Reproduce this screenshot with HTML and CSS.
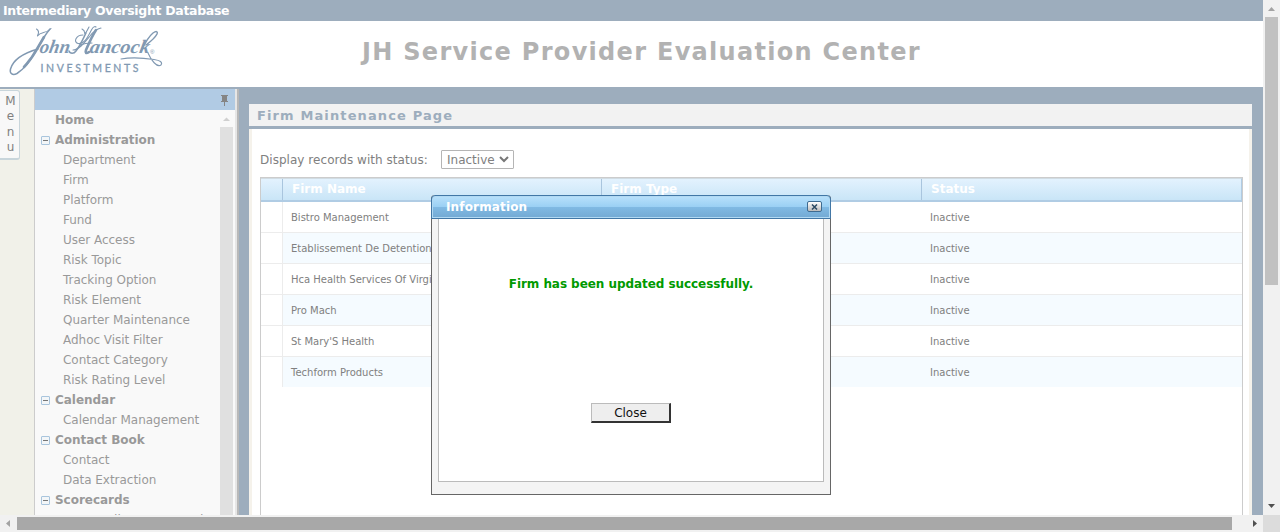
FILE: index.html
```html
<!DOCTYPE html>
<html lang="en">
<head>
<meta charset="utf-8">
<title>Intermediary Oversight Database</title>
<link rel="stylesheet" href="styles.css">
</head>
<body>
<div class="window">
  <div class="page">
    <div class="topbar">Intermediary Oversight Database</div>
    <header class="header">
      <svg class="logo" width="170" height="64" viewBox="0 21 170 64" role="img" aria-label="John Hancock Investments">
        <g class="swash">
          <path class="thin" d="M36.500 29C41 32 37 35 37.500 36C41 31 46 34 51 28.500"/>
          <path d="M50 29C44 36 40 44 36 51C31 60 24 69 17 73.500C12 76 9.500 73 10.500 69C13 60 24 53 38 49"/>
          <path class="thick" d="M44 37C40 44 36 51 32 57C29 61 27 64 24 67"/>
          <path class="thin" d="M82 29C86 31 84 33 85 34C87 31 88 29 89 27"/>
          <path d="M86 33C83 39 80 46 76 51C74 54 70 54 69 51"/>
          <path class="thin" d="M83 35C76 35 73 42 78 43.500C85 45 89 34 92 29C93 27 95 26 96 27"/>
          <path class="thin" d="M73 50C79 50 85 42 90 36C93 32 96 29 101 28"/>
          <path class="thick" d="M96 30C92 36 89 43 86 50C85 53 86 54 89 52"/>
          <path class="thin" d="M80 45C85 43 88 43 92 43"/>
          <path d="M141 51C144 45 148 37 153 33C156 31 158 31 157 34C155 38 150 42 146 45"/>
          <path class="thin" d="M121 59C132 57 144 58 154 59.500C160 60.500 163 62 161 65C157 68 151 60 148 53"/>
        </g>
        <text class="script" transform="translate(39 53) skewX(-10)" textLength="30" lengthAdjust="spacingAndGlyphs">ohn</text>
        <text class="script" transform="translate(89 53) skewX(-10)" textLength="60" lengthAdjust="spacingAndGlyphs">ancock</text>
        <text class="reg" x="150" y="54">®</text>
        <text class="invest" x="40.500" y="72" textLength="98">INVESTMENTS</text>
      </svg>
      <h1 class="app-title">JH Service Provider Evaluation Center</h1>
    </header>
    <div class="body">
      <div class="rail"><div class="menu-tab"><span>M</span><span>e</span><span>n</span><span>u</span></div></div>
      <aside class="sidebar">
        <div class="side-head">
          <svg width="9" height="11" viewBox="0 0 9 11"><path d="M1 0h7v1H7v5h1v1H5v4H4V7H1V6h1V1H1z" fill="#858585"/></svg>
        </div>
        <div class="side-body">
          <ul class="tree">
            <li class="group leaf">Home</li>
            <li class="group"><i class="toggle"></i>Administration</li>
            <li>Department</li><li>Firm</li><li>Platform</li><li>Fund</li><li>User Access</li><li>Risk Topic</li><li>Tracking Option</li><li>Risk Element</li><li>Quarter Maintenance</li><li>Adhoc Visit Filter</li><li>Contact Category</li><li>Risk Rating Level</li>
            <li class="group"><i class="toggle"></i>Calendar</li>
            <li>Calendar Management</li>
            <li class="group"><i class="toggle"></i>Contact Book</li>
            <li>Contact</li><li>Data Extraction</li>
            <li class="group"><i class="toggle"></i>Scorecards</li>
            <li>Intermediary Scorecard</li>
          </ul>
          <div class="side-scroll">
            <svg width="13" height="17" viewBox="0 0 13 17"><path d="M3 11L6.500 7.500L10 11z" fill="#d0d0d0"/></svg>
            <div class="side-thumb"></div>
          </div>
        </div>
      </aside>
      <main class="main">
        <section class="panel">
          <h2 class="panel-title">Firm Maintenance Page</h2>
          <div class="panel-body">
            <div class="filter">
              <span class="filter-label">Display records with status:</span>
              <div class="select"><span>Inactive</span><svg width="10" height="7" viewBox="0 0 10 7"><path d="M1 1l4 4l4-4" fill="none" stroke="#777" stroke-width="2"/></svg></div>
            </div>
            <div class="grid">
              <div class="row head"><div></div><div>Firm Name</div><div>Firm Type</div><div>Status</div></div>
              <div class="row"><div></div><div>Bistro Management</div><div></div><div>Inactive</div></div>
              <div class="row alt"><div></div><div>Etablissement De Detention</div><div></div><div>Inactive</div></div>
              <div class="row"><div></div><div>Hca Health Services Of Virginia</div><div></div><div>Inactive</div></div>
              <div class="row alt"><div></div><div>Pro Mach</div><div></div><div>Inactive</div></div>
              <div class="row"><div></div><div>St Mary'S Health</div><div></div><div>Inactive</div></div>
              <div class="row alt last"><div></div><div>Techform Products</div><div></div><div>Inactive</div></div>
            </div>
          </div>
        </section>
      </main>
    </div>
  </div>
  <div class="vscroll">
    <svg width="17" height="17" viewBox="0 0 17 17"><path d="M5 11L8.500 7L12 11z" fill="#a3a3a3"/></svg>
    <div class="vthumb"></div>
    <svg class="end" width="17" height="17" viewBox="0 0 17 17"><path d="M5 6L8.500 10L12 6z" fill="#505050"/></svg>
  </div>
  <div class="hscroll">
    <svg width="17" height="17" viewBox="0 0 17 17"><path d="M10 5L6 8.500L10 12z" fill="#a3a3a3"/></svg>
    <div class="hthumb"></div>
    <svg class="end-h" width="17" height="17" viewBox="0 0 17 17"><path d="M7 5L11 8.500L7 12z" fill="#505050"/></svg>
  </div>
  <div class="corner"></div>
  <div class="dialog">
    <div class="dialog-title"><span>Information</span>
      <div class="dialog-x"><svg width="7" height="6" viewBox="0 0 7 6"><path d="M1 .5L6 5.500M6 .5L1 5.500" stroke="#2c4a63" stroke-width="1.500"/></svg></div>
    </div>
    <div class="dialog-body">
      <p class="message">Firm has been updated successfully.</p>
      <button class="close">Close</button>
    </div>
  </div>
</div>
</body>
</html>
```
FILE: styles.css
```css
* { box-sizing: border-box; }
body { margin: 0; overflow: hidden; font-family: Verdana, "DejaVu Sans", sans-serif; font-size: 12px; color: #808080; }
.window { position: relative; display: grid; grid-template: 515px 17px / 1263px 17px; width: 1280px; height: 532px; }
.page { display: flex; flex-direction: column; overflow: hidden; background: #fff; }
.topbar { flex: none; height: 21px; padding-left: 3px; line-height: 21px; background: #9dadbd; color: #fff; font-weight: bold; font-size: 12.500px; letter-spacing: -.31px; }
.header { flex: none; display: flex; height: 66px; }
.logo { flex: none; }
.swash { fill: none; stroke: #8199b2; stroke-width: 1.500; stroke-linecap: round; stroke-linejoin: round; }
.swash .thick { stroke-width: 2.600; }
.swash .thin { stroke-width: 1.100; }
.script { font: italic bold 19px "Liberation Serif", serif; fill: #8199b2; }
.reg { font: 6px "Liberation Sans", sans-serif; fill: #8199b2; }
.invest { font: 10.500px Lato, sans-serif; fill: #8199b2; stroke: #8199b2; stroke-width: .3; }
.app-title { flex: 1; margin: 0 152px 0 0; padding-left: 2px; text-align: center; font-size: 24px; line-height: 63px; color: #b2b2b2; letter-spacing: 1.300px; white-space: nowrap; }
.body { flex: 1; display: flex; min-height: 0; border-top: 2px solid #9dadbd; }
.rail { flex: none; width: 34px; background: #f1f1e9; }
.menu-tab { display: flex; flex-direction: column; align-items: center; width: 20px; height: 70px; padding: 3px 0 0 2px; margin-top: 1px; line-height: 15.300px; background: #f8f8f8; border: 1px solid #c8d5db; border-width: 1px 1px 2px 0; border-radius: 0 3px 3px 0; }
.sidebar { flex: none; display: flex; flex-direction: column; width: 205px; border-left: 1px solid #ccc; border-right: 2px solid #b8b8b8; background: #f9f9f9; box-shadow: inset -2px 0 #e6e6e6; }
.side-head { flex: none; display: flex; justify-content: flex-end; align-items: center; width: 200px; height: 21px; padding: 1px 6px 0 0; background: #b1cbe4; }
.side-body { flex: 1; display: flex; min-height: 0; width: 198px; }
.tree { flex: 1; margin: 0; padding: 0; list-style: none; color: #999; white-space: nowrap; overflow: hidden; letter-spacing: -.03px; }
.tree li { display: flex; align-items: center; height: 20px; padding-left: 28px; }
.tree .group { padding-left: 6px; font-weight: bold; color: #999; }
.tree .leaf { padding-left: 20px; }
.toggle { position: relative; width: 9px; height: 9px; margin: 1px 5px 0 0; border: 1px solid #a9c5dd; border-radius: 1px; background: #f3f6f8; }
.toggle::after { content: ""; position: absolute; left: 1px; top: 3px; width: 5px; height: 1px; background: #777; }
.side-scroll { display: flex; flex-direction: column; width: 13px; }
.side-scroll svg { flex: none; }
.side-thumb { flex: 1; background: #e0e0e0; }
.main { flex: 1; display: flex; padding: 15px 11px 0 10px; background: #9dadbd; }
.panel { flex: 1; display: flex; flex-direction: column; min-width: 0; }
.panel-title { flex: none; height: 25px; margin: 0; padding-left: 8px; font-size: 13px; line-height: 23px; letter-spacing: 1.120px; color: #9dadbd; background: #f2f2f2; border-bottom: 3px solid #9dadbd; border-radius: 0 0 3px 3px; }
.panel-body { flex: 1; display: flex; flex-direction: column; padding: 21px 6px 0 8px; background: #fff; border: solid #f5f2eb; border-width: 0 3px; }
.filter { flex: none; display: flex; align-items: center; height: 19px; }
.filter-label { width: 181px; letter-spacing: .04px; }
.select { display: flex; align-items: center; justify-content: space-between; width: 73px; height: 19px; padding: 0 4px 0 5px; border: 1px solid #b5b5b5; border-radius: 1px; }
.grid { flex: 1; margin-top: 8px; border: 1px solid #ccc; border-bottom: 0; }
.row { display: grid; grid-template-columns: 21px 319px 320px 1fr; height: 31px; line-height: 31px; font-size: 10px; border-bottom: 1px solid #ececec; }
.row > div { padding-left: 9px; overflow: hidden; white-space: nowrap; }
.row > div:first-child { background: #fff; box-shadow: 1px 0 #ececec; }
.alt { background: #f5fbff; }
.last { border-bottom: 0; height: 30px; }
.head { height: 24px; font-size: 12px; line-height: 21px; font-weight: bold; color: #fff; background: linear-gradient(#e3f2fe, #c9e5f7); border: 1px solid #b0cce4; border-width: 1px 1px 2px 0; border-top-color: #d1dce3; }
.head > div + div { border-left: 1px solid #a9c5de; }
.row.head > div:first-child { background: none; box-shadow: none; }
.vscroll { display: flex; flex-direction: column; background: #f1f1f1; }
.vthumb { width: 13px; height: 268px; margin-left: 2px; background: #c1c1c1; }
.end { margin-top: auto; }
.hscroll { display: flex; background: #f1f1f1; }
.hthumb { width: 1215px; height: 13px; margin-top: 2px; background: #a8a8a8; }
.end-h { margin-left: auto; }
.corner { background: #dcdcdc; }
.dialog { position: absolute; left: 431px; top: 195px; width: 400px; height: 300px; display: flex; flex-direction: column; background: #f4f4f4; border: 1px solid #666; border-top: 0; border-radius: 4px 4px 0 0; }
.dialog-title { flex: none; display: flex; justify-content: space-between; align-items: center; height: 24px; margin: 0 -1px; padding: 0 8px 1px 14px; color: #fff; font-weight: bold; letter-spacing: .15px; background: linear-gradient(#b9e1fb, #9bd0f4 48%, #80b9e3 52%, #73a9d3); border: 1px solid #4277a6; border-radius: 4px 4px 0 0; box-shadow: inset 0 0 0 1px #b1d9f3; }
.dialog-x { display: flex; align-items: center; justify-content: center; width: 15px; height: 11px; border: 1px solid #3f6b90; border-radius: 2px; background: linear-gradient(#fff, #bbb); }
.dialog-body { flex: 1; display: flex; flex-direction: column; align-items: center; margin: 0 6px 12px; background: #fff; border: 1px solid #bbb; border-top: 0; }
.message { margin: 57px 0 0; line-height: 17px; font-weight: bold; letter-spacing: -.06px; color: #009a00; white-space: nowrap; }
.close { width: 80px; height: 20px; margin-top: 110px; padding: 0; font: 12px Verdana, "DejaVu Sans", sans-serif; color: #111; background: #eee; border: solid #333; border-width: 1px 2px 2px 1px; border-top-color: #bbb; border-left-color: #bbb; }
```
